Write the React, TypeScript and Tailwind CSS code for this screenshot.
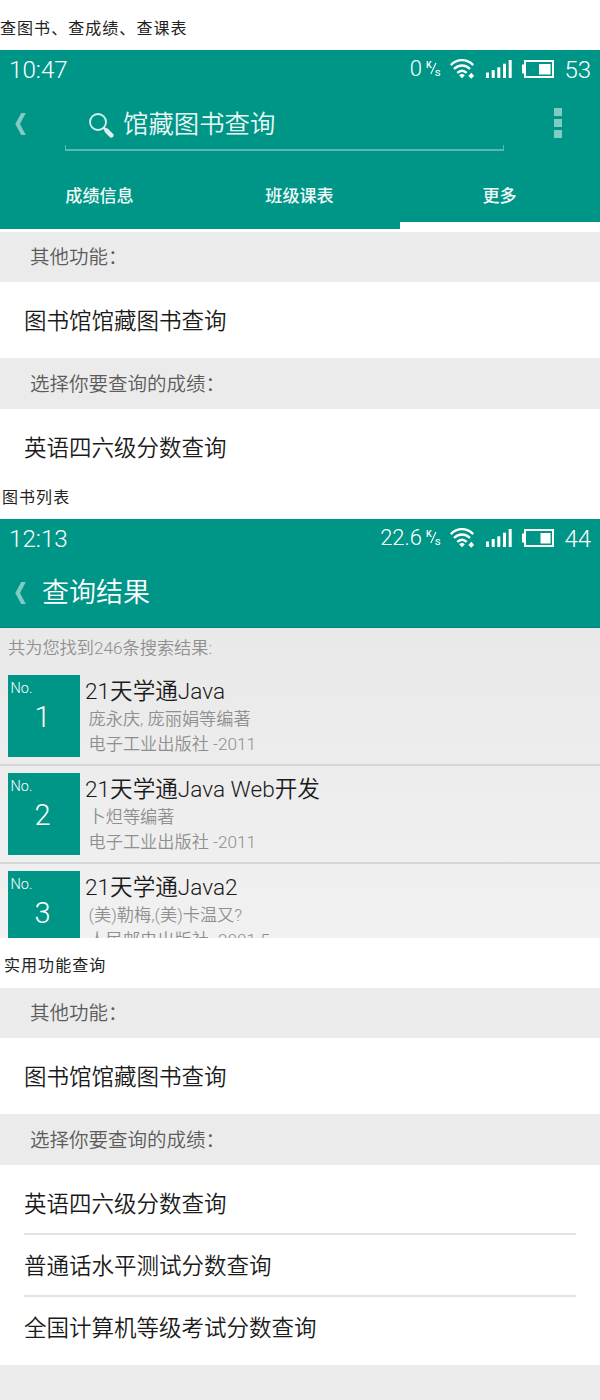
import type { ReactNode } from "react";

const CJK = "font-['Roboto','Noto_Sans_CJK_SC',sans-serif]";

function Caption({ children, className }: { children: ReactNode; className: string }) {
  return (
    <div className={`flex items-center text-[16px] leading-none tracking-[1.05px] text-[#222] ${className}`}>
      {children}
    </div>
  );
}

function WifiIcon() {
  return (
    <svg className="h-[20px] w-[24px] shrink-0" viewBox="0 0 24 20" fill="none" stroke="#fff" strokeWidth="2.4">
      <path d="M0.8 6.1C7.3 -0.5 16.700 -0.5 23.200 6.100" />
      <path d="M4 10C8.600 5.300 15.400 5.300 20 10" />
      <path d="M7.300 13.900C10.200 11.200 13.800 11.200 16.700 13.900" />
      <path d="M9.200 16.200Q12 13.600 14.800 16.200L12 19.200Z" fill="#fff" stroke="none" />
      <path d="M21.300 13.800L24.200 16.900L21.300 19.800L18.400 16.900Z" fill="#fff" stroke="none" />
    </svg>
  );
}

function SignalIcon() {
  return (
    <svg className="h-[18px] w-[26px] shrink-0" viewBox="0 0 26 18" fill="#fff">
      <rect x="0" y="12.500" width="3" height="5.500" />
      <rect x="5.700" y="10" width="3" height="8" />
      <rect x="11.300" y="7.300" width="3" height="10.700" />
      <rect x="17" y="3.700" width="3" height="14.300" />
      <rect x="22.700" y="0" width="3" height="18" />
    </svg>
  );
}

function BatteryIcon({ level }: { level: number }) {
  return (
    <svg className="h-[18px] w-[32px] shrink-0" viewBox="0 0 32 18">
      <rect x="3" y="1" width="28" height="16" fill="none" stroke="#fff" strokeWidth="2" />
      <rect x="0" y="4.500" width="3" height="9" fill="#fff" />
      <rect x={28.5 - level} y="4" width={level} height="10.500" fill="#fff" />
    </svg>
  );
}

function SpeedUnit() {
  return (
    <svg className="h-[18px] w-[15px] shrink-0" viewBox="0 0 15 18" fill="#fff">
      <text x="0" y="7.500" fontSize="9" fontWeight="500" fontFamily="Roboto">K</text>
      <path d="M10 3L4.800 14" stroke="#fff" strokeWidth="1.100" />
      <text x="8.800" y="15.800" fontSize="11.500" fontWeight="400" fontFamily="Roboto">s</text>
    </svg>
  );
}

function StatusBar({ time, speed, battery, level }: { time: string; speed: string; battery: string; level: number }) {
  return (
    <div className="flex h-[38px] items-center pl-[9px] pr-[9px] font-light text-white">
      <span className="pt-[2px] text-[24.2px] leading-none">{time}</span>
      <span className="ml-auto text-[22px] leading-none">{speed}</span>
      <span className="ml-[4px] flex"><SpeedUnit /></span>
      <span className="ml-[9px] flex"><WifiIcon /></span>
      <span className="ml-[12px] flex"><SignalIcon /></span>
      <span className="ml-[10px] flex"><BatteryIcon level={level} /></span>
      <span className="ml-[10px] w-[27px] pt-[1px] text-right text-[24px] leading-none">{battery}</span>
    </div>
  );
}

function BackIcon() {
  return (
    <svg className="h-[22px] w-[11px] shrink-0" viewBox="0 0 11 22" fill="#80cbc3">
      <path d="M6.200 0H10.800L5 11L10.800 22H6.200L0.300 11Z" />
    </svg>
  );
}

function SectionHeader({ children, className }: { children: ReactNode; className: string }) {
  return (
    <div className={`flex items-center bg-[#ebebeb] pl-[30px] pt-[2px] text-[19.5px] font-[350] leading-none text-[#5c5c5c] ${className}`}>
      {children}
    </div>
  );
}

function Item({ children, className }: { children: ReactNode; className: string }) {
  return (
    <div className={`flex items-center text-[22.5px] font-[350] leading-none text-[#1a1a1a] ${className}`}>
      {children}
    </div>
  );
}

const books = [
  { title: "21天学通Java", author: "庞永庆, 庞丽娟等编著", press: "电子工业出版社 -2011" },
  { title: "21天学通Java Web开发", author: "卜炟等编著", press: "电子工业出版社 -2011" },
  { title: "21天学通Java2", author: "(美)勒梅,(美)卡温又?", press: "人民邮电出版社 -2001.5" },
];

export default function App() {
  return (
    <div className={`flex h-[1400px] w-[600px] flex-col overflow-hidden bg-white ${CJK}`} lang="zh-CN">
      <Caption className="h-[50px] shrink-0 pt-[8px]">查图书、查成绩、查课表</Caption>

      <header className="flex h-[179px] shrink-0 flex-col bg-[#009687]">
        <StatusBar time="10:47" speed="0" battery="53" level={11.5} />
        <div className="flex h-[63px] items-start pl-[15px]">
          <div className="mt-[25px] flex"><BackIcon /></div>
          <div className="ml-[39px] flex h-[63px] w-[439px] flex-col justify-end">
            <div className="flex h-[50px] items-center pl-[24px] pt-[8px]">
              <svg className="mt-[3px] h-[25px] w-[25px]" viewBox="0 0 25 25" fill="none" stroke="#d9f0ed">
                <circle cx="9" cy="9" r="8" strokeWidth="1.800" />
                <path d="M14.500 14.500L17.500 17.500" strokeWidth="2.500" />
                <path d="M17.800 17.800L22.300 22.300" strokeWidth="4.600" strokeLinecap="round" />
              </svg>
              <span className="ml-[9px] pt-[1px] text-[25.4px] font-[350] leading-none text-[#e9f7f5]">馆藏图书查询</span>
            </div>
            <div className="h-[6px] border-x border-b-2 border-[#57b9af]" />
          </div>
          <div className="ml-[50px] mt-[20px] flex flex-col gap-[3px]">
            <span className="h-[8px] w-[8px] bg-[#80cbc3]" />
            <span className="h-[8px] w-[8px] bg-[#80cbc3]" />
            <span className="h-[8px] w-[8px] bg-[#80cbc3]" />
          </div>
        </div>
        <nav className="grid h-[78px] grid-cols-3 text-center text-[17.1px] font-medium leading-none text-[#f0faf9]">
          <span className="pr-[1px] pt-[37px]">成绩信息</span>
          <span className="pr-[1px] pt-[37px]">班级课表</span>
          <span className="border-b-[7px] border-white pr-[1px] pt-[37px]">更多</span>
        </nav>
      </header>

      <SectionHeader className="mt-[3px] h-[50px] shrink-0">其他功能：</SectionHeader>
      <Item className="h-[76px] shrink-0 pl-[24px] pt-[2px]">图书馆馆藏图书查询</Item>
      <SectionHeader className="h-[51px] shrink-0">选择你要查询的成绩：</SectionHeader>
      <Item className="h-[76px] shrink-0 pl-[24px] pt-[2px]">英语四六级分数查询</Item>
      <Caption className="h-[34px] shrink-0 pb-[9px] pl-[2px]">图书列表</Caption>

      <header className="h-[109px] shrink-0 border-b border-[#008377] bg-[#009687]">
        <StatusBar time="12:13" speed="22.6" battery="44" level={10} />
        <div className="flex h-[70px] items-center pl-[15px] pt-[1px]">
          <BackIcon />
          <span className="ml-[16px] pt-[2px] text-[27px] font-[350] leading-none text-white">查询结果</span>
        </div>
      </header>

      <section className="h-[310px] shrink-0 overflow-hidden bg-linear-to-b from-[#e9e9e9] to-[#f1f1f1] font-[350]">
        <div className="flex h-[40px] items-center pl-[8px] pt-[2px] text-[17.2px] leading-none text-[#8f8f8f]">
          共为您找到246条搜索结果:
        </div>
        {books.map((b, i) => (
          <article key={b.title} className="flex h-[98px] border-b-2 border-[#d6d6d6] pl-[7.5px] pt-[7px]">
            <div className="flex h-[82px] w-[72px] flex-col bg-[#009687] font-light text-white">
              <span className="pl-[3px] pt-[7px] text-[14.5px] leading-[14px]">No.</span>
              <span className="pr-[2px] pt-[6px] text-center text-[29px] leading-[30px]">{i + 1}</span>
            </div>
            <div className="flex flex-col whitespace-nowrap pl-[5.5px] leading-none text-[#8f8f8f]">
              <h2 className="h-[32px] pt-[1px] text-[22.6px] leading-[32px] text-[#1a1a1a]">{b.title}</h2>
              <p className="h-[25px] pl-[3.5px] text-[17.2px] leading-[25px]">{b.author}</p>
              <p className="h-[25px] pl-[3.5px] text-[17.2px] leading-[25px]">{b.press}</p>
            </div>
          </article>
        ))}
      </section>

      <Caption className="h-[50px] shrink-0 pl-[4px] pt-[5px]">实用功能查询</Caption>

      <SectionHeader className="h-[50px] shrink-0">其他功能：</SectionHeader>
      <Item className="h-[76px] shrink-0 pl-[24px] pt-[2px]">图书馆馆藏图书查询</Item>
      <SectionHeader className="h-[51px] shrink-0">选择你要查询的成绩：</SectionHeader>
      <div className="flex h-[200px] shrink-0 flex-col px-[24px]">
        <Item className="h-[70px] border-b-2 border-[#e3e3e3] pt-[10px]">英语四六级分数查询</Item>
        <Item className="h-[62px] border-b-2 border-[#e3e3e3] pt-[2px]">普通话水平测试分数查询</Item>
        <Item className="h-[68px] pb-[6px]">全国计算机等级考试分数查询</Item>
      </div>
      <div className="flex-1 bg-[#ebebeb]" />
    </div>
  );
}
